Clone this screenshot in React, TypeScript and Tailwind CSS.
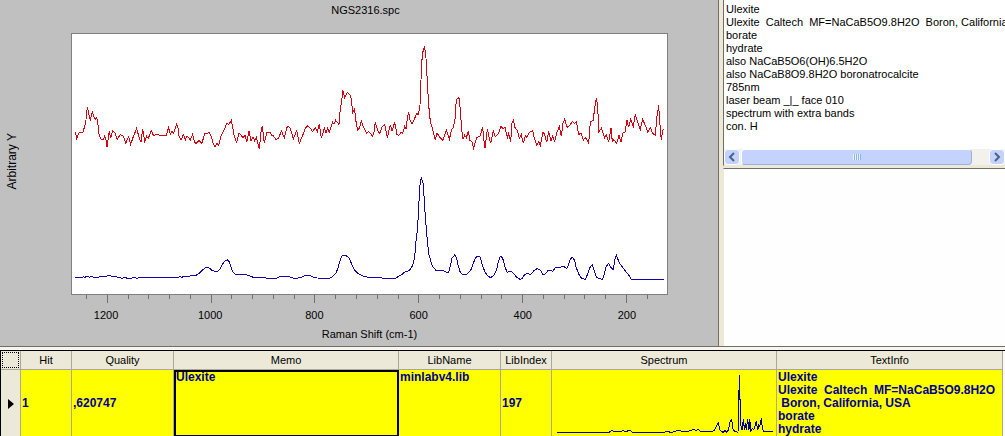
import React, { useState } from 'react';

interface TraceSegment {
  dx: number;
  dy: number;
  points: string;
}

interface SearchHit {
  hit: number;
  quality: string;
  memo: string;
  libName: string;
  libIndex: number;
  textInfo: string;
}

const SAMPLE_TRACE: TraceSegment[] = [
  {
    dx: 0,
    dy: 0,
    points: '46,321 50,340 57,323 68,324 74,304 78,284 79,262 83,250 88,276 91,283 97,262 101,274 106,283 110,277 113,290 117,328 124,345 130,344 134,334 138,346 141,365 145,340 148,319 152,338 158,318 165,324 172,343 181,328 190,334 197,355 206,335 212,358 220,335 230,310 236,333 243,352 248,311 254,349 260,334 265,340 274,317 280,331 290,329 318,333 326,307 331,327 336,320 341,325 350,297 355,313 357,334 363,346 370,329 376,344 381,332 391,345 398,328 403,350 408,355 417,347 426,355 434,325 441,326 447,322 453,332 459,353 465,365 471,355 476,360 484,330 493,314 500,295 507,298 514,286 519,311 523,335 530,352 537,325 543,329 549,340 555,329 560,352 567,317 573,348 579,335 584,348 589,337 598,373 603,320 607,302 613,355 620,323 630,321',
  },
  {
    dx: 600,
    dy: 0,
    points: '34,330 40,332 48,344 56,340 64,317 73,338 82,304 90,308 100,341 110,317 118,355 128,331 137,308 143,302 150,308 158,320 166,307 172,320 178,298 184,340 193,310 198,323 203,310 208,322 218,292 222,297 227,286 237,298 241,250 245,232 248,196 254,217 262,202 270,210 274,222 278,264 284,252 287,284 293,316 299,308 304,289 311,308 320,326 326,319 338,334 342,320 346,292 353,316 359,326 366,305 374,298 382,338 391,299 396,318 404,292 411,328 416,332 423,322 428,325 434,305 438,313 442,280 446,262 450,284 456,297 463,283 470,265 475,269 480,240 484,140 487,86 493,67 497,82 501,152 506,240 511,290 516,307 521,325 526,346 531,323 537,334 549,346 559,314 568,343 575,314 580,308 585,282 589,223 597,218 601,256 605,314',
  },
  {
    dx: 1200,
    dy: 0,
    points: '9,343 14,331 19,338 25,319 30,346 36,350 41,370 50,337 60,334 68,307 71,340 75,370 82,313 87,335 92,355 100,317 106,335 114,328 123,304 130,311 135,307 142,338 146,325 152,352 156,295 160,286 165,308 172,316 178,341 184,329 190,355 196,332 200,337 208,322 218,317 223,340 230,361 237,350 241,361 249,322 254,328 260,352 266,319 273,347 278,334 284,349 290,325 298,304 304,333 309,295 314,283 321,307 330,300 337,289 344,296 349,290 356,328 364,325 370,346 376,337 386,355 391,290 400,286 403,256 409,220 413,240 416,322 424,310 434,338 439,329 446,352 453,310 457,350 461,343 470,355 477,331 483,352 489,323 495,322 501,286 506,307 512,283 520,304 526,268 533,292 541,313 548,283 557,304 563,322 571,308 578,325 586,331 590,280 596,241 600,300 604,346 608,317 611,313',
  },
];

const LIBRARY_TRACE: TraceSegment[] = [
  {
    dx: 0,
    dy: 435,
    points: '46,322 66,322 70,320 74,322 82,319 88,322 96,319 102,322 118,321 122,319 138,319 148,316 156,319 166,320 178,323 186,325 194,322 202,325 214,325 222,322 232,325 242,322 354,322 360,319 366,322 370,319 384,319 396,317 410,315 420,308 430,298 438,292 446,293 456,301 466,304 474,303 480,297 488,282 494,273 502,270 508,276 514,295 520,307 528,314 540,314 554,313 568,317 580,322 612,322 620,325 650,325 658,321 668,319 686,319 694,323 706,325 722,323 736,316 748,316 760,321 772,324 808,325 818,320 828,309 834,294 840,272 846,258 852,255 864,260 870,270 876,285 884,300 892,309 904,316 914,320 930,322',
  },
  {
    dx: 900,
    dy: 435,
    points: '60,323 70,325 106,325 114,320 124,315 134,306 146,302 152,297 158,286 164,262 167,222 171,190 174,150 177,95 180,45 184,22 190,42 193,95 196,140 200,190 203,220 206,250 212,272 218,290 228,301 240,301 250,301 260,308 266,306 270,292 276,265 284,255 290,264 294,284 300,305 308,314 320,313 332,301 340,280 346,264 354,258 360,260 366,282 374,304 382,317 392,323 402,315 410,300 414,280 419,262 424,259 430,270 434,290 442,307 452,304 460,309 470,322 480,328 486,326 492,316 502,310 512,314 522,302 532,295 542,302 548,313 554,314 564,302 572,301 578,304 586,293 604,291 612,290 620,295 626,284 631,266 638,262 644,272 648,290 656,312 664,324 676,328 684,310 690,292 697,284 703,304 710,322 720,326 727,328 733,313 738,290 746,280 752,292 760,299 764,270 769,254 773,266 780,282 794,300 806,315 814,328 911,328',
  },
];

const THUMBNAIL_TRACE: TraceSegment[] = [
  {
    dx: 0,
    dy: 0,
    points: '36,280 192,280 200,274 206,277 218,279 228,278 234,275 240,278 255,274 262,280 358,280 362,277 368,277 376,280 385,279 393,276 404,274 410,277 430,277 440,273 446,271 452,275 460,271 466,276 478,279 484,276 492,276 500,278 508,274 514,262 520,252 524,272 530,277 534,280 540,274 545,279 550,274 555,250 560,241 564,270 568,276 575,279 579,279 581,200 583,108 585,182 587,182 588,260 591,272 595,240 598,272 601,252 604,272 608,240 612,272 614,241 618,277 622,268 626,272 630,260 634,246 638,274 641,258 644,262 649,238 652,268 656,277 684,277',
  },
];

const AXIS_LABELS = [1200, 1000, 800, 600, 400, 200];

const COLUMNS = ['Hit', 'Quality', 'Memo', 'LibName', 'LibIndex', 'Spectrum', 'TextInfo'];

const DESCRIPTION = `Ulexite
Ulexite  Caltech  MF=NaCaB5O9.8H2O  Boron, California, USA
borate
hydrate
also NaCaB5O6(OH)6.5H2O
also NaCaB8O9.8H2O boronatrocalcite
785nm
laser beam _|_ face 010
spectrum with extra bands
con. H`;

const HITS: SearchHit[] = [
  {
    hit: 1,
    quality: ',620747',
    memo: 'Ulexite',
    libName: 'minlabv4.lib',
    libIndex: 197,
    textInfo: 'Ulexite\nUlexite  Caltech  MF=NaCaB5O9.8H2O\n Boron, California, USA\nborate\nhydrate',
  },
];

// Segments are recorded separately, each with its own origin
const joinSegments = (segments: TraceSegment[]) =>
  segments
    .flatMap(({ dx, dy, points }) =>
      points.split(' ').map(p => {
        const [x, y] = p.split(',').map(Number);
        return `${x + dx},${y + dy}`;
      })
    )
    .join(' ');

const Trace: React.FC<{ segments: TraceSegment[]; color: string }> = ({ segments, color }) => (
  <polyline
    points={joinSegments(segments)}
    fill="none"
    stroke={color}
    strokeWidth={1}
    vectorEffect="non-scaling-stroke"
    shapeRendering="crispEdges"
  />
);

const AxisTicks: React.FC = () => {
  const ticks = Array.from({ length: 28 }, (_, i) => ({ x: 15 + i * 20.77, major: i % 5 === 1 }));

  return (
    <svg className="block h-2 w-full" viewBox="0 0 597 8" preserveAspectRatio="none" aria-hidden="true">
      {ticks.map(({ x, major }) => (
        <rect key={x} x={Math.round(x)} y={0} width={1} height={major ? 8 : 4} fill="#707070" shapeRendering="crispEdges" />
      ))}
    </svg>
  );
};

const SpectrumChart: React.FC = () => (
  <section className="flex min-w-0 bg-[#c0c0c0] border-r border-[#716f64]">
    <div className="flex w-[71px] shrink-0 items-center pb-6 pl-1">
      <span className="rotate-180 text-[12px] leading-4 [writing-mode:vertical-rl]">Arbitrary Y</span>
    </div>
    <div className="mr-[50px] flex min-w-0 flex-1 flex-col">
      <h1 className="h-[33px] pt-1 pr-2 text-center leading-[13px]">NGS2316.spc</h1>
      <div className="h-[262px] border border-[#808080] bg-white">
        <svg className="block h-full w-full" viewBox="36 27 1785 780" preserveAspectRatio="none" role="img" aria-label="Raman spectra">
          <Trace segments={SAMPLE_TRACE} color="#d80010" />
          <Trace segments={LIBRARY_TRACE} color="#1000b0" />
        </svg>
      </div>
      <AxisTicks />
      <div className="-ml-[17px] -mr-[11px] mt-[6px] grid grid-cols-6 text-center leading-[13px]">
        {AXIS_LABELS.map(label => (
          <span key={label}>{label}</span>
        ))}
      </div>
      <p className="mt-[6px] pb-[5px] text-center leading-[13px]">Raman Shift (cm-1)</p>
    </div>
  </section>
);

const ScrollButton: React.FC<{ direction: 'left' | 'right'; onClick: () => void }> = ({ direction, onClick }) => (
  <button
    type="button"
    aria-label={`Scroll ${direction}`}
    onClick={onClick}
    className="flex h-4 w-4 shrink-0 items-center justify-center rounded-sm border border-white bg-[#c3d3fd]"
  >
    <svg width="8" height="10" viewBox="0 0 8 10" fill="none" stroke="#4d6185" strokeWidth="2">
      <path d={direction === 'left' ? 'M6 1L2 5L6 9' : 'M2 1L6 5L2 9'} />
    </svg>
  </button>
);

const DetailsPane: React.FC = () => {
  const textRef = React.useRef<HTMLTextAreaElement>(null);
  const scroll = (amount: number) => textRef.current?.scrollBy({ left: amount });

  return (
    <aside className="flex min-w-0 flex-col bg-[#ece9d8] pl-1">
      <div className="border-l border-b border-[#716f64] border-b-[#ece9d8] bg-white">
        <textarea
          ref={textRef}
          aria-label="Spectrum description"
          wrap="off"
          readOnly
          defaultValue={DESCRIPTION}
          className="block h-[149px] w-full resize-none overflow-hidden pl-[2px] pt-[3px] leading-[13px] outline-none"
        />
        <div className="flex h-4 bg-[#f3f1ec]">
          <ScrollButton direction="left" onClick={() => scroll(-20)} />
          <div className="flex-1 pl-px pr-[17px]">
            <div className="flex h-4 items-center justify-center gap-px rounded-sm border border-white border-r-[#98b0e8] border-b-[#98b0e8] bg-[#c3d3fd]">
              {[0, 1, 2, 3].map(i => (
                <span key={i} className="h-[6px] w-px bg-[#eef4fe] shadow-[1px_0_0_#8cb0f8]" />
              ))}
            </div>
          </div>
          <ScrollButton direction="right" onClick={() => scroll(20)} />
        </div>
      </div>
      <div className="mt-[2px] flex-1 border-t border-l border-t-[#716f64] border-l-[#ece9d8] bg-[#fffefe]" />
    </aside>
  );
};

const HitTable: React.FC = () => {
  const [selected, setSelected] = useState(0);
  const cell = 'border-r border-[#aca899] py-px pl-px leading-[13px]';

  return (
    <div className="border-t border-l border-black bg-[#fbfaf4] pr-[2px]">
      <table className="w-full table-fixed border-separate border-spacing-0 text-left">
        <colgroup>
          <col className="w-[20px]" />
          <col className="w-[51px]" />
          <col className="w-[102px]" />
          <col className="w-[225px]" />
          <col className="w-[102px]" />
          <col className="w-[51px]" />
          <col className="w-[225px]" />
          <col />
        </colgroup>
        <thead>
          <tr className="h-[19px] bg-[#ece9d8]">
            <td className="border-r border-b border-[#aca899] p-px">
              <div className="h-4 border border-dotted border-black" />
            </td>
            {COLUMNS.map(column => (
              <th key={column} scope="col" className="border-r border-b border-[#aca899] p-0 text-center font-normal leading-[13px]">
                {column}
              </th>
            ))}
          </tr>
        </thead>
        <tbody>
          {HITS.map((hit, index) => (
            <tr key={hit.hit} onClick={() => setSelected(index)} className="h-[66px] bg-[#ffff00] text-[12px] font-bold text-[#000090]">
              <td className="border-r border-[#aca899] bg-[#ece9d8] p-0">
                {selected === index && (
                  <svg className="ml-[7px] block" width="6" height="10" viewBox="0 0 6 10" aria-hidden="true">
                    <path d="M0 0L6 5L0 10Z" fill="#000" />
                  </svg>
                )}
              </td>
              <td className={cell}>{hit.hit}</td>
              <td className={cell}>{hit.quality}</td>
              <td className="py-px pl-[2px] align-top leading-[13px] outline-2 -outline-offset-2 outline-black">{hit.memo}</td>
              <td className={`${cell} align-top`}>{hit.libName}</td>
              <td className={cell}>{hit.libIndex}</td>
              <td className="border-r border-[#aca899] p-0">
                <svg className="block h-[66px] w-full" viewBox="21 96 672 198" preserveAspectRatio="none" role="img" aria-label="Library spectrum">
                  <Trace segments={THUMBNAIL_TRACE} color="#000090" />
                </svg>
              </td>
              <td className={`${cell} overflow-hidden whitespace-pre`}>{hit.textInfo}</td>
            </tr>
          ))}
        </tbody>
      </table>
    </div>
  );
};

const App: React.FC = () => {
  return (
    <main className="bg-[#ece9d8] font-['Liberation_Sans',Arial,sans-serif] text-[11px] text-black">
      <div className="grid grid-cols-[719fr_286fr]">
        <SpectrumChart />
        <DetailsPane />
      </div>
      <div className="h-1 border-t border-[#716f64] bg-[#f8f6ee]" />
      <HitTable />
    </main>
  );
};

export default App;
